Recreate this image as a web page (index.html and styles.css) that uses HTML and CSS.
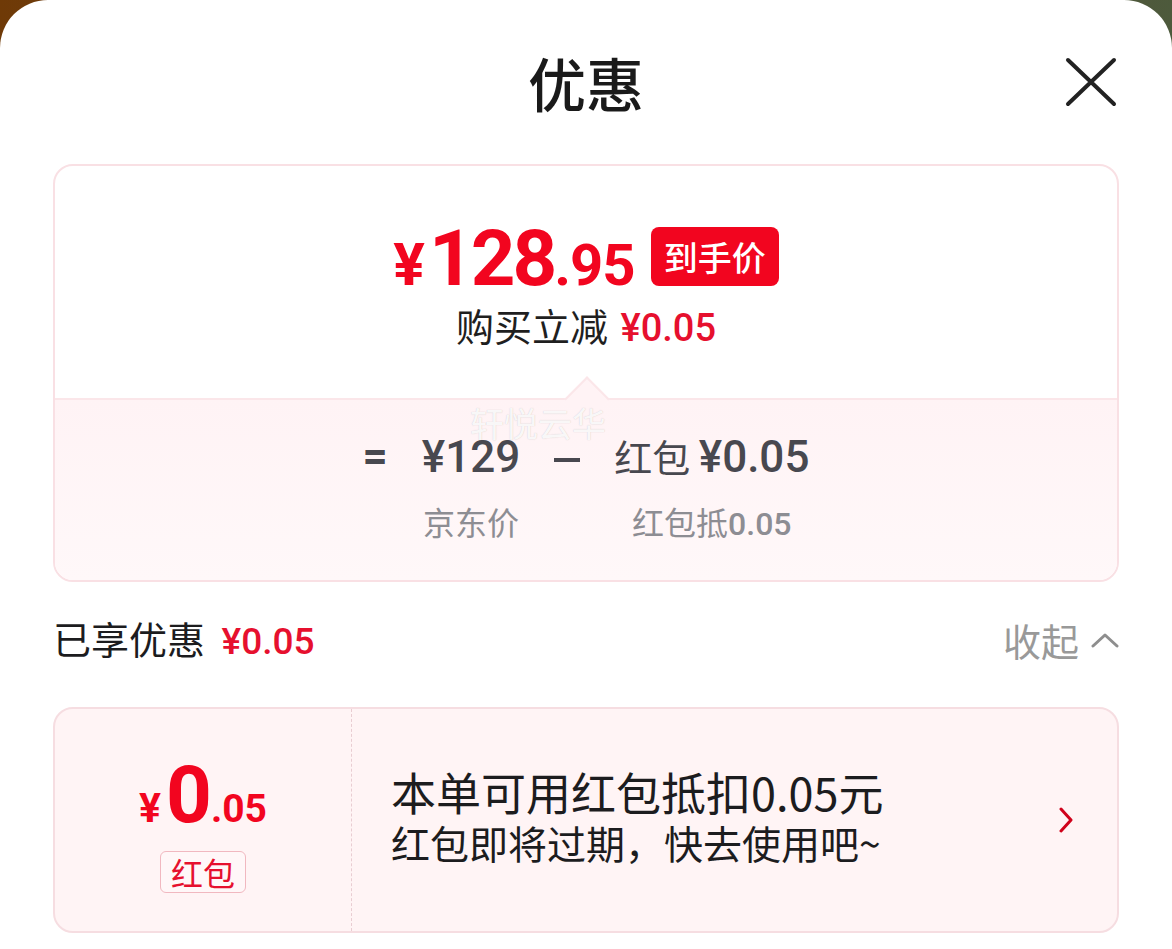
FILE: index.html
```html
<!DOCTYPE html>
<html>

<head>
  <meta charset="utf8">
  <meta name="viewport" content="width=device-width, initial-scale=1.0">
  <link rel="stylesheet" href="styles.css">
  <title>优惠</title>
</head>

<body>
  <div class="sheet">
    <header class="header">
      <h1 class="title">优惠</h1>
      <button class="close" aria-label="关闭">
        <svg width="52" height="50" viewBox="0 0 52 50">
          <path d="M3 3 L49 47 M49 3 L3 47" stroke="#222" stroke-width="4" stroke-linecap="round" fill="none"/>
        </svg>
      </button>
    </header>

    <section class="summary">
      <div class="summary-top">
        <div class="price-row">
          <span class="price"><span class="price-sign">¥</span><span class="price-int">128</span><span class="price-dec">.95</span></span>
          <span class="tag">到手价</span>
        </div>
        <p class="saving">购买立减 <span class="red-num">¥0.05</span></p>
      </div>

      <div class="summary-bottom">
        <span class="watermark">轩悦云华</span>
        <div class="breakdown">
          <span class="op">=</span>
          <div class="term">
            <span class="term-value"><span class="num">¥129</span></span>
            <span class="term-label">京东价</span>
          </div>
          <span class="op op-minus"></span>
          <div class="term">
            <span class="term-value">红包 <span class="num">¥0.05</span></span>
            <span class="term-label">红包抵<span class="num-light">0.05</span></span>
          </div>
        </div>
      </div>
    </section>

    <div class="enjoyed">
      <span class="enjoyed-label">已享优惠 <span class="red-num">¥0.05</span></span>
      <span class="collapse">收起
        <svg width="28" height="16" viewBox="0 0 28 16">
          <path d="M2 14 L14 3 L26 14" stroke="#8e8e8e" stroke-width="3" fill="none" stroke-linecap="round" stroke-linejoin="round"/>
        </svg>
      </span>
    </div>

    <section class="coupon">
      <div class="coupon-left">
        <div class="coupon-amount"><span class="c-sign">¥</span><span class="c-int">0</span><span class="c-dec">.05</span></div>
        <span class="coupon-tag">红包</span>
      </div>
      <div class="coupon-right">
        <div class="coupon-text">
          <p class="coupon-title">本单可用红包抵扣0.05元</p>
          <p class="coupon-sub">红包即将过期，快去使用吧~</p>
        </div>
        <svg class="coupon-arrow" width="16" height="26" viewBox="0 0 16 26">
          <path d="M3 2 L13 13 L3 24" stroke="#d0021b" stroke-width="3" fill="none" stroke-linecap="round" stroke-linejoin="round"/>
        </svg>
      </div>
    </section>
  </div>
</body>

</html>
```

FILE: styles.css
```css
body {
  margin: 0;
  background: linear-gradient(90deg, #6f3a07 0%, #5e4431 55%, #4d5a3c 100%);
  font-family: "Noto Sans CJK SC", "Noto Sans", sans-serif;
  color: #1c1c1e;
}
p {
  margin: 0;
}
.sheet {
  min-height: 949px;
  background: #fff;
  border-radius: 48px 48px 0 0;
  padding: 0 53px;
  box-sizing: border-box;
}

/* header */
.header {
  height: 164px;
  display: grid;
  grid-template-columns: 1fr auto 1fr;
  align-items: center;
}
.title {
  grid-column: 2;
  margin: 0;
  font-size: 58px;
  font-weight: 500;
  line-height: 164px;
  color: #1a1a1a;
}
.close {
  grid-column: 3;
  justify-self: end;
  margin-right: 2px;
  padding: 0;
  border: 0;
  background: none;
  display: flex;
}

/* summary card */
.summary {
  border: 2px solid #f9e0e4;
  border-radius: 20px;
  overflow: hidden;
}
.summary-top {
  height: 232px;
  box-sizing: border-box;
  padding-top: 54px;
  display: flex;
  flex-direction: column;
  align-items: center;
}
.price-row {
  display: flex;
  align-items: center;
  gap: 16px;
}
.price {
  display: flex;
  align-items: baseline;
  font-family: Roboto, sans-serif;
  font-weight: 700;
  color: #f2051f;
  line-height: 77px;
}
.price-sign {
  font-size: 59px;
  margin-right: 4px;
}
.price-int {
  font-size: 78px;
  letter-spacing: -3px;
}
.price-dec {
  font-size: 58px;
  letter-spacing: -1px;
}
.tag {
  margin-bottom: 12px;
  background: #f2051f;
  color: #fff;
  font-size: 34px;
  font-weight: 500;
  line-height: 59px;
  padding: 0 13px;
  border-radius: 8px;
}
.saving {
  margin-top: -3px;
  font-size: 38px;
  line-height: 48px;
  color: #1f1f1f;
}
.red-num {
  font-family: Roboto, sans-serif;
  font-weight: 500;
  color: #e6102e;
  margin-left: 4px;
}

.summary-bottom {
  position: relative;
  border-top: 2px solid #fbe6e9;
  background: linear-gradient(180deg, #fff3f5 0%, #fff8f9 100%);
  padding: 31px 0 36px;
}
.summary-bottom::before {
  content: "";
  position: absolute;
  left: 50%;
  top: -17px;
  width: 30px;
  height: 30px;
  margin-left: -15px;
  background: #fff3f5;
  border-top: 2px solid #fbe6e9;
  border-left: 2px solid #fbe6e9;
  transform: rotate(45deg);
}
.watermark {
  position: absolute;
  left: 415px;
  top: -2px;
  font-size: 34px;
  color: rgba(255, 255, 255, 0.9);
  text-shadow: 0 0 1px rgba(110, 100, 100, 0.35);
}
.breakdown {
  position: relative;
  display: flex;
  justify-content: center;
  align-items: flex-start;
  gap: 34px;
  color: #48484f;
}
.op {
  font-family: Roboto, sans-serif;
  font-weight: 700;
  font-size: 44px;
  line-height: 50px;
}
.op-minus {
  width: 26px;
  height: 50px;
  background: linear-gradient(#48484f, #48484f) center 27px / 26px 4px no-repeat;
}
.term {
  display: flex;
  flex-direction: column;
  align-items: center;
}
.term-value {
  font-size: 38px;
  line-height: 50px;
  white-space: nowrap;
}
.num {
  font-family: Roboto, sans-serif;
  font-weight: 500;
  font-size: 44px;
}
.term-label {
  margin-top: 19px;
  font-size: 32px;
  line-height: 40px;
  color: #8d8d93;
}
.num-light {
  font-family: Roboto, sans-serif;
  font-weight: 500;
}

/* enjoyed row */
.enjoyed {
  margin: 33px 0 42px;
  height: 50px;
  display: flex;
  align-items: center;
  justify-content: space-between;
}
.enjoyed-label {
  font-size: 38px;
  line-height: 50px;
  color: #1c1c1e;
}
.enjoyed-label .red-num {
  font-size: 37px;
  margin-left: 8px;
}
.collapse {
  display: flex;
  align-items: center;
  gap: 12px;
  font-size: 38px;
  line-height: 50px;
  color: #999;
}

/* coupon card */
.coupon {
  height: 226px;
  box-sizing: border-box;
  display: grid;
  grid-template-columns: 297px 1fr;
  border: 2px solid #f6dde1;
  border-radius: 20px;
  background: #fff4f5;
}
.coupon-left {
  border-right: 1px dashed #e9cdd2;
  display: flex;
  flex-direction: column;
  align-items: center;
  justify-content: center;
  padding-top: 8px;
}
.coupon-amount {
  display: flex;
  align-items: baseline;
  font-family: Roboto, sans-serif;
  font-weight: 700;
  color: #f2051f;
  line-height: 80px;
}
.c-sign {
  font-size: 41px;
  margin-right: 5px;
}
.c-int {
  font-size: 80px;
  letter-spacing: -3px;
}
.c-dec {
  font-size: 39px;
  margin-left: 2px;
}
.coupon-tag {
  margin-top: 2px;
  border: 1px solid #f1b8c0;
  border-radius: 6px;
  background: #fff7f8;
  color: #e6102e;
  font-size: 32px;
  line-height: 40px;
  padding: 0 10px;
}
.coupon-right {
  display: flex;
  align-items: center;
  padding: 0 43px 10px 39px;
}
.coupon-text {
  flex: 1;
}
.coupon-title {
  font-size: 45px;
  line-height: 52px;
  color: #1c1c1e;
}
.coupon-sub {
  margin-top: 1px;
  font-size: 39px;
  line-height: 46px;
  color: #1c1c1e;
}
.coupon-arrow {
  margin-top: 10px;
}
```
